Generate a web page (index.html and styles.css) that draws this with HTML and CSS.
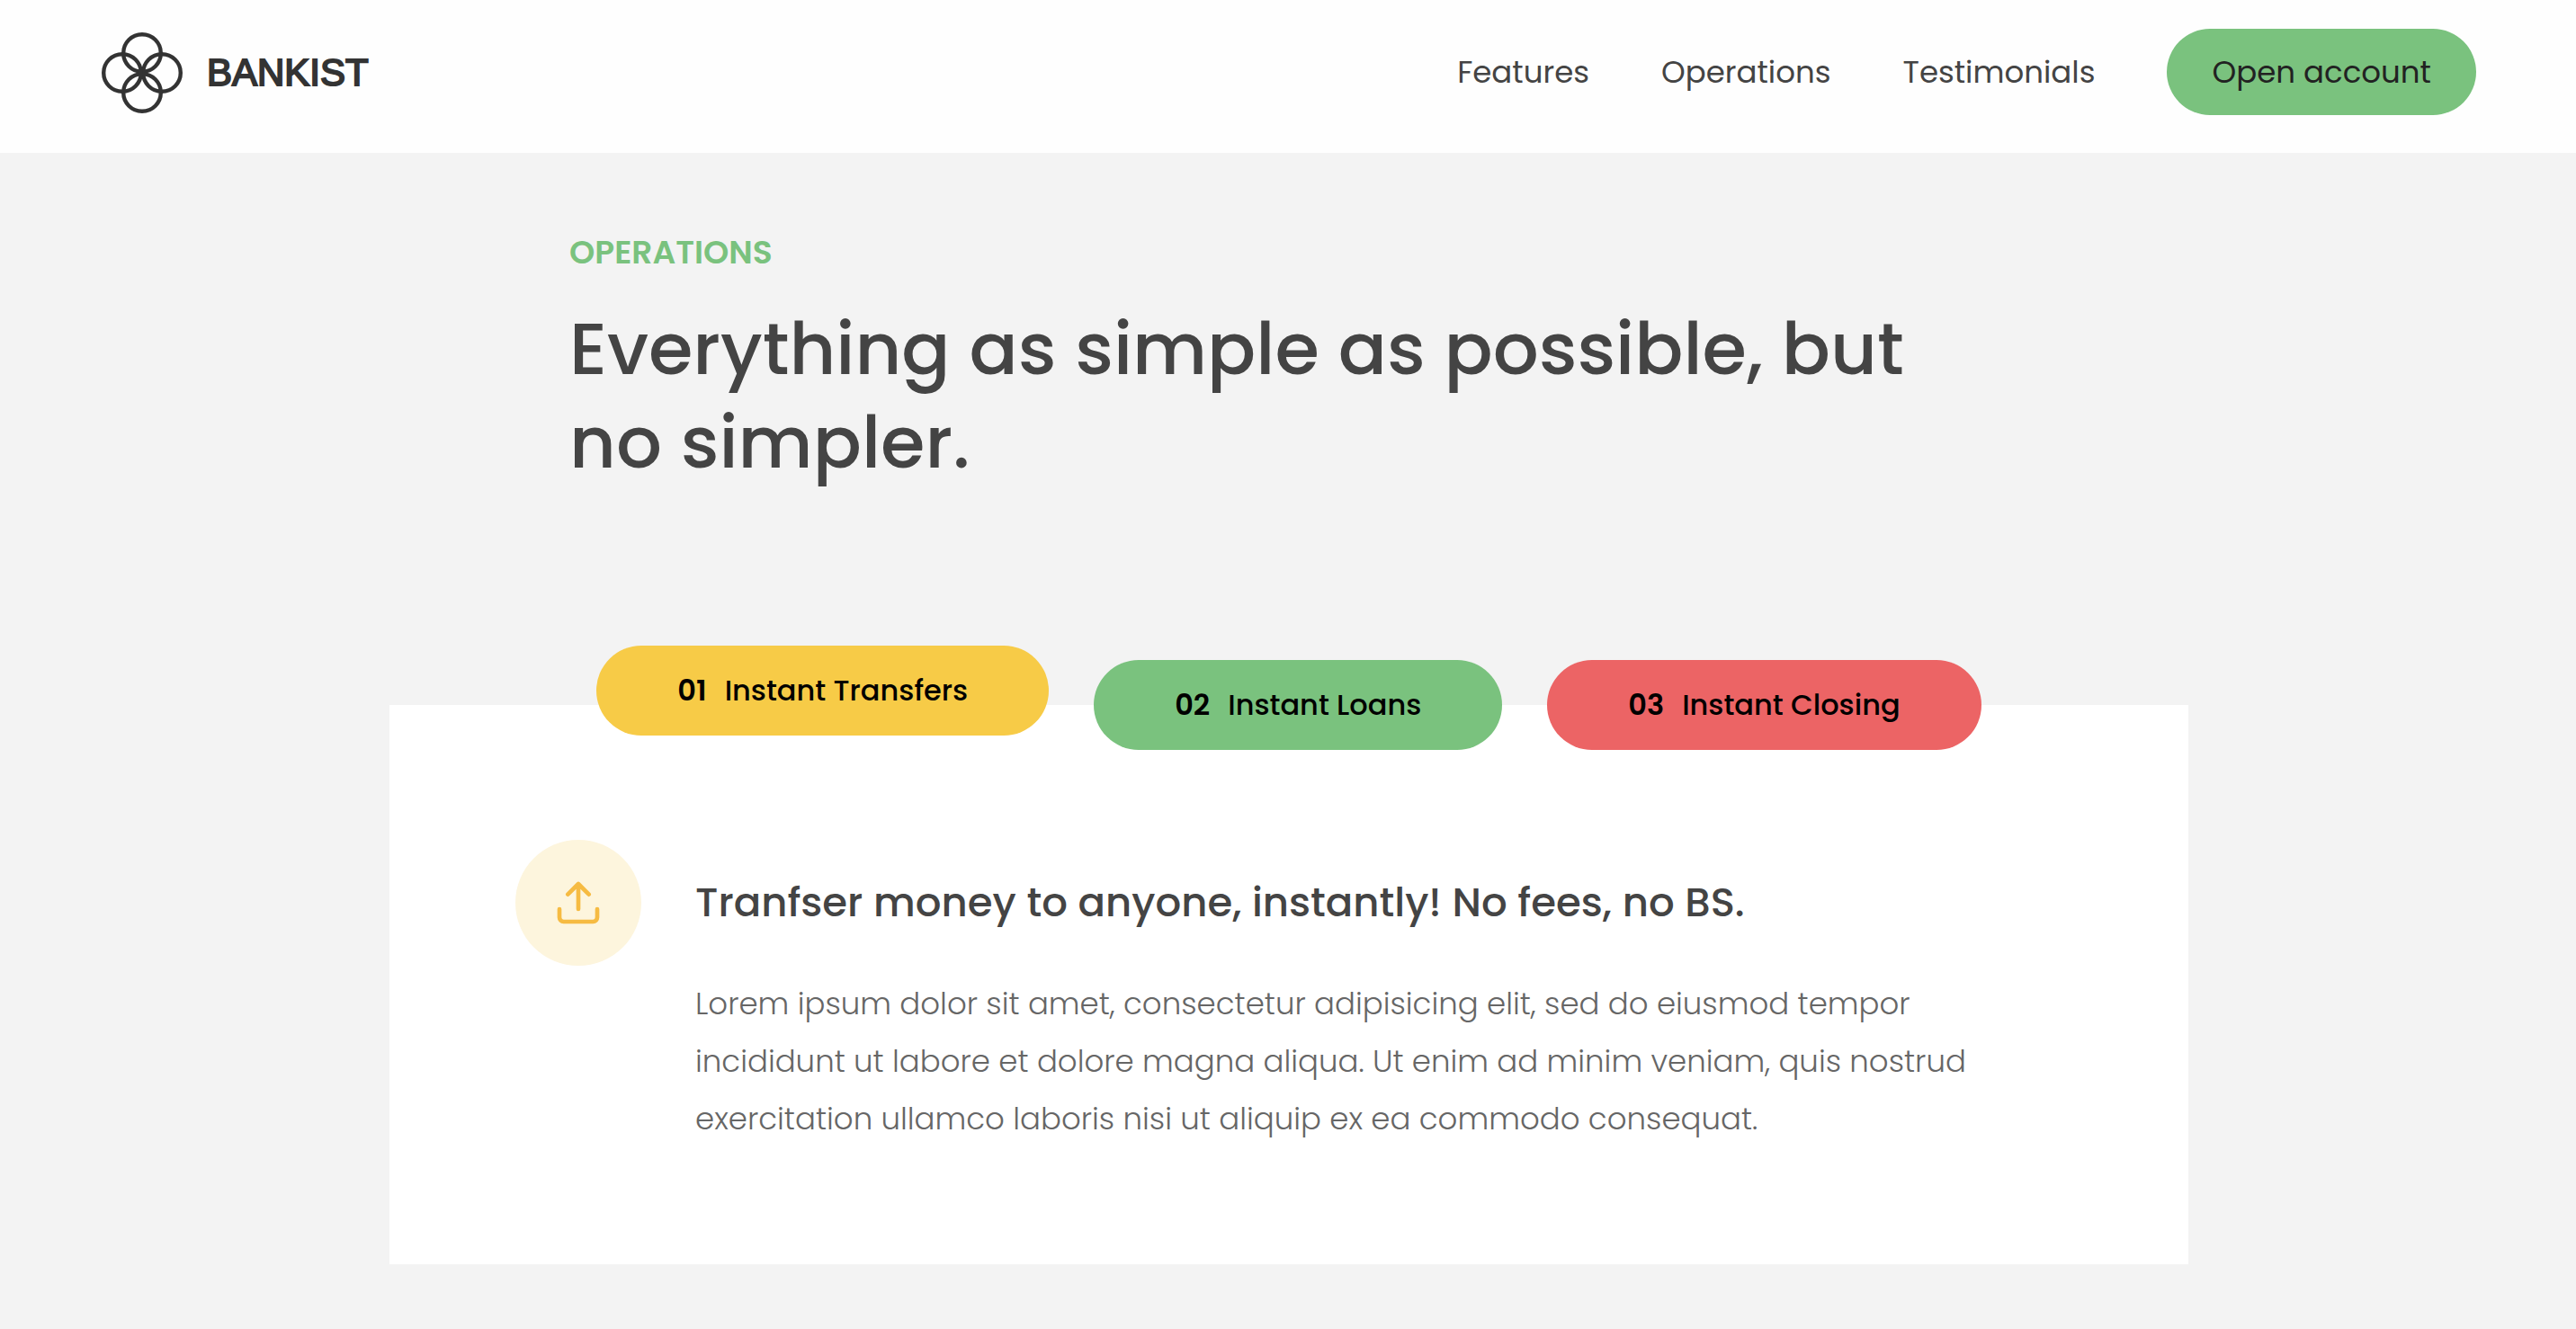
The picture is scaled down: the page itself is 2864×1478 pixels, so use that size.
FILE: index.html
```html
<!DOCTYPE html>
<html lang="en">
<head>
<meta charset="utf-8">
<meta name="viewport" content="width=device-width, initial-scale=1">
<title>Bankist</title>
<link rel="stylesheet" href="styles.css">
</head>
<body>
<header class="nav">
  <a class="logo" href="#top">
    <svg class="logo-mark" viewBox="0 0 90 90" aria-hidden="true">
      <circle cx="45" cy="23" r="20.8"/>
      <circle cx="67" cy="45" r="20.8"/>
      <circle cx="45" cy="67" r="20.8"/>
      <circle cx="23" cy="45" r="20.8"/>
    </svg>
    <span class="logo-text">BANKIST</span>
  </a>
  <nav class="nav-links">
    <a class="nav-link" href="#features">Features</a>
    <a class="nav-link" href="#operations">Operations</a>
    <a class="nav-link" href="#testimonials">Testimonials</a>
    <a class="nav-link nav-button" href="#open">Open account</a>
  </nav>
</header>
<main class="section" id="operations">
  <div class="section-title">
    <h2 class="eyebrow">Operations</h2>
    <h3 class="headline">Everything as simple as possible, but no simpler.</h3>
  </div>
  <div class="operations">
    <div class="tabs" role="tablist">
      <button class="tab tab-yellow tab-active" type="button" role="tab" aria-selected="true" aria-controls="transfers"><span class="tab-number">01</span>Instant Transfers</button>
      <button class="tab tab-green" type="button" role="tab" aria-selected="false"><span class="tab-number">02</span>Instant Loans</button>
      <button class="tab tab-red" type="button" role="tab" aria-selected="false"><span class="tab-number">03</span>Instant Closing</button>
    </div>
    <div class="panel" id="transfers" role="tabpanel">
      <div class="panel-icon">
        <svg class="upload" viewBox="0 0 24 24" aria-hidden="true">
          <path d="M21 15v4a2 2 0 0 1-2 2H5a2 2 0 0 1-2-2v-4M17 8l-5-5-5 5M12 3v12"/>
        </svg>
      </div>
      <div class="panel-body">
        <h4 class="panel-title">Tranfser money to anyone, instantly! No fees, no BS.</h4>
        <p class="panel-text">Lorem ipsum dolor sit amet, consectetur adipisicing elit, sed do eiusmod tempor incididunt ut labore et dolore magna aliqua. Ut enim ad minim veniam, quis nostrud exercitation ullamco laboris nisi ut aliquip ex ea commodo consequat.</p>
      </div>
    </div>
  </div>
</main>
</body>
</html>
```
FILE: styles.css
```css
* {
  box-sizing: border-box;
  margin: 0;
  padding: 0;
}

body {
  background: #f3f3f3;
  color: #444;
  font-family: Poppins, Inter, sans-serif;
}

.nav {
  display: flex;
  align-items: center;
  justify-content: space-between;
  padding: 32px 111px 42px 113px;
  background: #fefefe;
}

.logo {
  display: flex;
  align-items: center;
  gap: 27px;
  padding-top: 2px;
  color: #333;
  text-decoration: none;
}

.logo-mark {
  width: 90px;
  height: 90px;
  fill: none;
  stroke: #333;
  stroke-width: 4.4;
}

.logo-text {
  font-family: "Liberation Sans", Arial, sans-serif;
  font-size: 42px;
  -webkit-text-stroke: 2px #333;
}

.nav-links {
  display: flex;
  align-items: center;
  gap: 80px;
}

.nav-link {
  color: #444;
  font-size: 34px;
  line-height: 48px;
  text-decoration: none;
}

.nav-button {
  padding: 24px 50px;
  border-radius: 48px;
  background: #7ac27e;
  color: #222;
}

.section {
  padding: 84px 111px 72px 113px;
}

.section-title {
  max-width: 1600px;
  margin: 0 auto 240px;
}

.eyebrow {
  margin-bottom: 28px;
  color: #7ac27e;
  font-size: 36px;
  font-weight: 600;
  line-height: 54px;
  text-transform: uppercase;
}

.headline {
  font-size: 80px;
  font-weight: 500;
  line-height: 104px;
}

.operations {
  max-width: 2000px;
  margin: 0 auto;
  background: #fff;
}

.tabs {
  display: flex;
  justify-content: center;
  gap: 50px;
}

.tab {
  height: 100px;
  padding: 0 90px;
  border: 0;
  border-radius: 50px;
  color: #000;
  font-family: inherit;
  font-size: 32px;
  font-weight: 500;
  transform: translateY(-50%);
}

.tab-active {
  transform: translateY(-66%);
}

.tab-number {
  margin-right: 20px;
  font-weight: 600;
}

.tab-yellow {
  background: #f7cb47;
}

.tab-green {
  background: #7ac27e;
}

.tab-red {
  background: #ec6465;
}

.panel {
  display: flex;
  align-items: flex-start;
  gap: 60px;
  padding: 50px 140px 130px;
}

.panel-icon {
  display: grid;
  flex: none;
  place-items: center;
  width: 140px;
  height: 140px;
  border-radius: 50%;
  background: #fdf5dd;
}

.upload {
  width: 56px;
  height: 56px;
  fill: none;
  stroke: #f6bb42;
  stroke-width: 2;
  stroke-linecap: round;
  stroke-linejoin: round;
}

.panel-body {
  padding-top: 34px;
}

.panel-title {
  margin-bottom: 44px;
  font-size: 45px;
  font-weight: 500;
  line-height: 72px;
}

.panel-text {
  color: #666;
  font-size: 34px;
  font-weight: 300;
  line-height: 64px;
}
```
